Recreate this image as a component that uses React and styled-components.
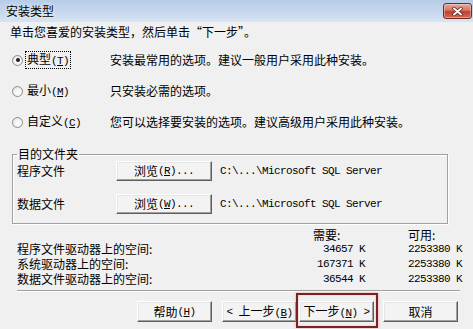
import React from 'react';
import styled, { createGlobalStyle } from 'styled-components';

const GlobalStyle = createGlobalStyle`
  html, body {
    margin: 0;
    padding: 0;
    background: #f0f0f0;
  }
  body {
    font-family: "Noto Sans CJK SC", "Noto Sans", sans-serif;
    font-size: 12px;
    color: #000;
  }
`;

const Window = styled.div`
  width: 473px;
  height: 329px;
  overflow: hidden;
  background: #f0f0f0;
  display: flex;
  flex-direction: column;
`;

// Title bar
const TitleBar = styled.div`
  flex: none;
  height: 22px;
  box-sizing: border-box;
  display: flex;
  align-items: center;
  justify-content: space-between;
  padding: 0 1px 0 6px;
  background: linear-gradient(to bottom, #b7cce7 0%, #c6d8ed 55%, #d7e4f2 100%);
`;

const Title = styled.span`
  line-height: 14px;
  text-shadow: 0 0 5px rgba(255, 255, 255, 0.95);
`;

const CloseButton = styled.div`
  box-sizing: border-box;
  width: 29px;
  height: 16px;
  border: 1px solid #6e2a22;
  border-radius: 3px;
  background: linear-gradient(to bottom, #eaa99b 0%, #d7735f 45%, #c13f2c 55%, #d56c52 100%);
  box-shadow: inset 0 0 0 1px rgba(255, 255, 255, 0.35);
  display: flex;
  align-items: center;
  justify-content: center;
`;

// Content
const Body = styled.div`
  flex: 1;
  padding: 3px 0 0 10px;
`;

const Intro = styled.div`
  line-height: 14px;
`;

const Options = styled.div`
  margin: 13px 0 0 2px;
  display: flex;
  flex-direction: column;
  gap: 15px;
`;

const OptionRow = styled.div`
  display: flex;
  align-items: center;
  height: 16px;
`;

const RadioCell = styled.div`
  width: 98px;
  display: flex;
  align-items: center;
`;

const Radio = styled.span`
  position: relative;
  box-sizing: border-box;
  width: 11px;
  height: 11px;
  margin-right: 2px;
  border-radius: 50%;
  border: 1px solid #8c8c8c;
  background: radial-gradient(circle at 60% 65%, #ffffff 0%, #f2f2f2 50%, #d6d6d6 100%);

  &::after {
    content: '';
    display: ${p => (p.$checked ? 'block' : 'none')};
    position: absolute;
    left: 2.5px;
    top: 2.5px;
    width: 4px;
    height: 4px;
    border-radius: 50%;
    background: #1e1e1e;
  }
`;

const RadioLabel = styled.span`
  line-height: 14px;
  padding: 0 1px;
  border: 1px dotted ${p => (p.$focused ? '#000' : 'transparent')};
`;

const Description = styled.span`
  line-height: 14px;
`;

const Mn = styled.span`
  font-family: "Liberation Mono", "DejaVu Sans Mono", monospace;
  font-size: 11px;
  letter-spacing: -0.6px;
`;

// Destination folder group
const GroupBox = styled.fieldset`
  box-sizing: border-box;
  width: 436px;
  margin: 17px 0 0 2px;
  padding: 0 4px 9px 4px;
  border: 1px solid #a0a0a0;
  box-shadow: inset 1px 1px 0 #fff, 1px 1px 0 #fff;
`;

const Legend = styled.legend`
  padding: 0 1px;
  line-height: 14px;
`;

const FolderRow = styled.div`
  display: flex;
  align-items: center;
  height: 20px;
  margin-top: ${p => p.$top || 0}px;
`;

const FolderLabel = styled.span`
  width: 99px;
  line-height: 14px;
`;

const Path = styled.span`
  margin-left: 8px;
  font-family: "Liberation Mono", "DejaVu Sans Mono", monospace;
  font-size: 11px;
  letter-spacing: -0.6px;
`;

const Button = styled.button`
  box-sizing: border-box;
  width: ${p => p.$w || 75}px;
  height: ${p => p.$h || 21}px;
  padding: 0;
  font-family: inherit;
  font-size: 12px;
  line-height: 14px;
  color: #000;
  background: #f3f3f3;
  border: 1px solid;
  border-color: #ffffff #5f5f5f #5f5f5f #ffffff;
  box-shadow: inset -1px -1px 0 #a0a0a0, inset 1px 1px 0 #e6e6e6;
  display: flex;
  align-items: center;
  justify-content: center;
  gap: ${p => p.$gap || 0}px;
`;

// Disk space table
const SpaceGrid = styled.div`
  margin: 4px 0 0 7px;
  display: grid;
  grid-template-columns: 296px 52px 43px auto;
  grid-template-rows: 13px 15px 15px 15px;
  align-items: center;
`;

const SpaceLabel = styled.span`
  grid-column: 1;
  line-height: 14px;
`;

const HeadCell = styled.span`
  grid-column: ${p => p.$col};
  line-height: 13px;
  white-space: nowrap;
`;

const Num = styled.span`
  grid-column: ${p => p.$col};
  text-align: ${p => (p.$right ? 'right' : 'left')};
  white-space: nowrap;
  font-family: "Liberation Mono", "DejaVu Sans Mono", monospace;
  font-size: 11px;
  letter-spacing: -0.6px;
  line-height: 14px;
`;

const Separator = styled.div`
  margin: 4px 0 0 7px;
  width: 443px;
  border-top: 1px solid #a0a0a0;
  border-bottom: 1px solid #ffffff;
`;

const ButtonRow = styled.div`
  margin-top: 9px;
  padding-right: 15px;
  display: flex;
  justify-content: flex-end;
  gap: 9px;
`;

const Pair = styled.div`
  display: flex;
  gap: 2px;
  margin-left: 1px;
`;

const Highlight = styled.div`
  position: relative;

  &::after {
    content: '';
    position: absolute;
    top: -8px;
    left: -3px;
    right: -4px;
    bottom: -6px;
    border: 2px solid #7a2222;
    box-shadow: 0 0 3px rgba(210, 110, 110, 0.55), inset 0 0 2px rgba(210, 110, 110, 0.4);
    pointer-events: none;
  }
`;

const options = [
  { label: '典型', key: 'T', text: '安装最常用的选项。建议一般用户采用此种安装。', checked: true },
  { label: '最小', key: 'M', text: '只安装必需的选项。' },
  { label: '自定义', key: 'C', text: '您可以选择要安装的选项。建议高级用户采用此种安装。' }
];

const spaces = [
  { label: '程序文件驱动器上的空间:', need: '34657 K', free: '2253380 K' },
  { label: '系统驱动器上的空间:', need: '167371 K', free: '2253380 K' },
  { label: '数据文件驱动器上的空间:', need: '36544 K', free: '2253380 K' }
];

const Key = ({ k }) => (
  <Mn>(<u>{k}</u>)</Mn>
);

const CloseIcon = () => (
  <svg width="11" height="9" viewBox="0 0 11 9">
    <path d="M2 1.5 L9 7.5 M9 1.5 L2 7.5" stroke="#5a1d16" strokeWidth="3.4" strokeLinecap="round" />
    <path d="M2 1.5 L9 7.5 M9 1.5 L2 7.5" stroke="#ffffff" strokeWidth="2" strokeLinecap="round" />
  </svg>
);

export default function App() {
  return (
    <>
      <GlobalStyle />
      <Window>
        <TitleBar>
          <Title>安装类型</Title>
          <CloseButton>
            <CloseIcon />
          </CloseButton>
        </TitleBar>

        <Body>
          <Intro>单击您喜爱的安装类型，然后单击“下一步”。</Intro>

          <Options>
            {options.map(o => (
              <OptionRow key={o.key}>
                <RadioCell>
                  <Radio $checked={o.checked} />
                  <RadioLabel $focused={o.checked}>
                    {o.label}<Key k={o.key} />
                  </RadioLabel>
                </RadioCell>
                <Description>{o.text}</Description>
              </OptionRow>
            ))}
          </Options>

          <GroupBox>
            <Legend>目的文件夹</Legend>
            <FolderRow>
              <FolderLabel>程序文件</FolderLabel>
              <Button $w={96} $h={20}>浏览<Key k="R" /><Mn>...</Mn></Button>
              <Path>C:\...\Microsoft SQL Server</Path>
            </FolderRow>
            <FolderRow $top={13}>
              <FolderLabel>数据文件</FolderLabel>
              <Button $w={96} $h={20}>浏览<Key k="W" /><Mn>...</Mn></Button>
              <Path>C:\...\Microsoft SQL Server</Path>
            </FolderRow>
          </GroupBox>

          <SpaceGrid>
            <span />
            <HeadCell $col={2}>需要:</HeadCell>
            <HeadCell $col={4}>可用:</HeadCell>
            {spaces.map(s => (
              <React.Fragment key={s.label}>
                <SpaceLabel>{s.label}</SpaceLabel>
                <Num $col={2} $right>{s.need}</Num>
                <Num $col={4}>{s.free}</Num>
              </React.Fragment>
            ))}
          </SpaceGrid>

          <Separator />

          <ButtonRow>
            <Button>帮助<Key k="H" /></Button>
            <Pair>
              <Button $gap={6}><Mn>&lt;</Mn><span>上一步<Key k="B" /></span></Button>
              <Highlight>
                <Button $gap={6}><span>下一步<Key k="N" /></span><Mn>&gt;</Mn></Button>
              </Highlight>
            </Pair>
            <Button>取消</Button>
          </ButtonRow>
        </Body>
      </Window>
    </>
  );
}
